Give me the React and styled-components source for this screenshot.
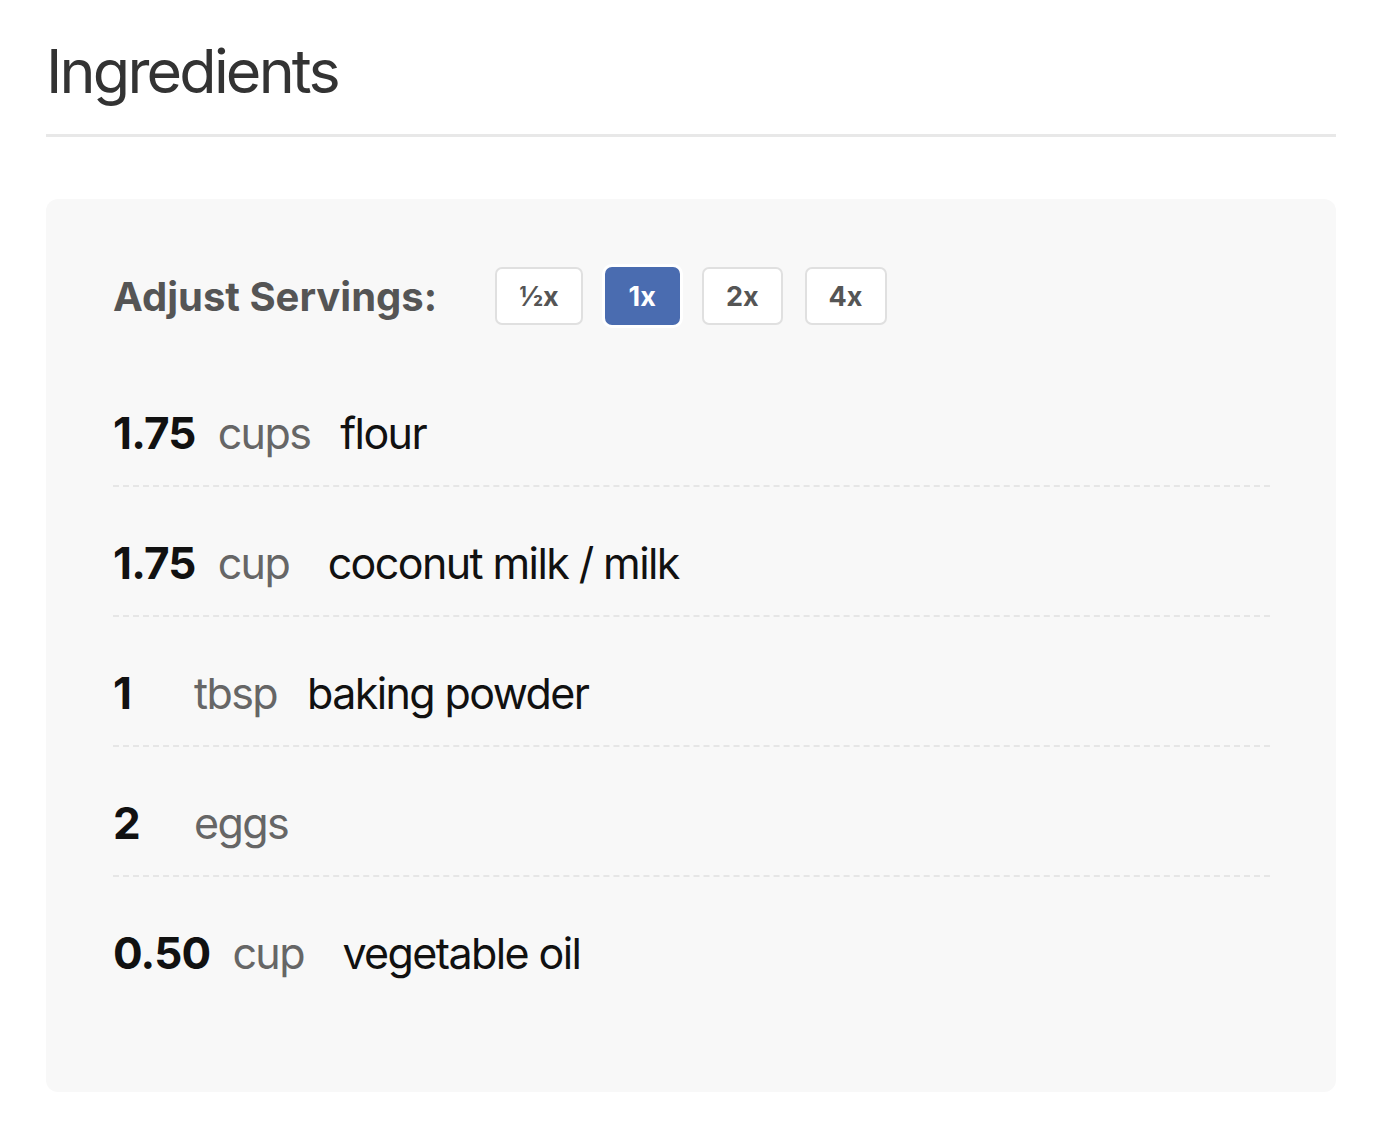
import React, { useState } from 'react';
import styled, { createGlobalStyle } from 'styled-components';

const GlobalStyle = createGlobalStyle`
  body {
    margin: 0;
    background: #ffffff;
    font-family: Inter, 'Noto Sans', sans-serif;
  }
`;

const Page = styled.div`
  padding: 32px 48px 40px 46px;
`;

const Title = styled.h1`
  margin: 0;
  padding-bottom: 24px;
  border-bottom: 3px solid #e8e8e8;
  font-size: 61px;
  font-weight: 400;
  line-height: 78px;
  letter-spacing: -2.8px;
  color: #333333;
`;

const Card = styled.section`
  margin-top: 62px;
  background: #f8f8f8;
  border-radius: 12px;
  padding: 68px 66px 87px 67px;
`;

const ServingsRow = styled.div`
  display: flex;
  align-items: center;
  gap: 22px;
  margin-bottom: 32px;
`;

const ServingsLabel = styled.span`
  font-size: 40px;
  font-weight: 700;
  letter-spacing: 0;
  color: #555555;
  margin-right: 36px;
`;

const ServingButton = styled.button`
  height: 58px;
  padding: 0 22px;
  border-radius: 7px;
  font-family: inherit;
  font-size: 27px;
  font-weight: 700;
  cursor: pointer;
  border: 2px solid ${p => (p.$active ? '#4a6cb0' : '#e0e0e0')};
  background: ${p => (p.$active ? '#4a6cb0' : '#ffffff')};
  color: ${p => (p.$active ? '#ffffff' : '#555555')};
  box-shadow: ${p => (p.$active ? '0 0 0 3px #ffffff' : 'none')};
`;

const List = styled.ul`
  list-style: none;
  margin: 0;
  padding: 0;
`;

const Item = styled.li`
  display: flex;
  align-items: center;
  padding: 48px 0 24px;
  font-size: 43px;
  line-height: 56px;
  letter-spacing: -1.6px;
  border-bottom: 2px dashed #e6e6e6;

  &:last-child {
    border-bottom: none;
  }
`;

const Amount = styled.span`
  min-width: 59px;
  margin-right: 22px;
  font-size: 44px;
  font-weight: 700;
  letter-spacing: -0.8px;
  color: #111111;
`;

const Unit = styled.span`
  min-width: 80px;
  margin-right: 30px;
  color: #666666;
`;

const Name = styled.span`
  color: #111111;
`;

const servings = ['½x', '1x', '2x', '4x'];

const ingredients = [
  { amount: '1.75', unit: 'cups', name: 'flour' },
  { amount: '1.75', unit: 'cup', name: 'coconut milk / milk' },
  { amount: '1', unit: 'tbsp', name: 'baking powder' },
  { amount: '2', unit: 'eggs', name: '' },
  { amount: '0.50', unit: 'cup', name: 'vegetable oil' },
];

export default function App() {
  const [active, setActive] = useState('1x');
  return (
    <>
      <GlobalStyle />
      <Page>
        <Title>Ingredients</Title>
        <Card>
          <ServingsRow>
            <ServingsLabel>Adjust Servings:</ServingsLabel>
            {servings.map(s => (
              <ServingButton key={s} $active={s === active} onClick={() => setActive(s)}>
                {s}
              </ServingButton>
            ))}
          </ServingsRow>
          <List>
            {ingredients.map((it, i) => (
              <Item key={i}>
                <Amount>{it.amount}</Amount>
                <Unit>{it.unit}</Unit>
                {it.name && <Name>{it.name}</Name>}
              </Item>
            ))}
          </List>
        </Card>
      </Page>
    </>
  );
}
